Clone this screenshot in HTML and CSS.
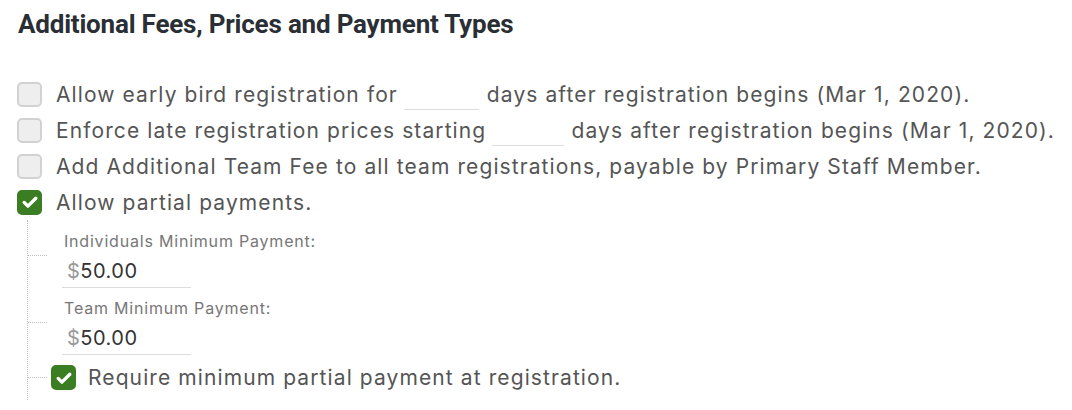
FILE: index.html
```html
<!DOCTYPE html>
<html lang="en">
  <head>
    <meta charset="UTF-8" />
    <title>Additional Fees</title>
    <link rel="stylesheet" href="styles.css">
  </head>
  <body>
    <h2 class="section-title">Additional Fees, Prices and Payment Types</h2>

    <div class="options">
      <label class="check-row">
        <span class="box"></span>
        <span class="check-text">Allow early bird registration for</span>
        <span class="days-input"></span>
        <span class="check-text">days after registration begins (Mar 1, 2020).</span>
      </label>

      <label class="check-row">
        <span class="box"></span>
        <span class="check-text">Enforce late registration prices starting</span>
        <span class="days-input"></span>
        <span class="check-text">days after registration begins (Mar 1, 2020).</span>
      </label>

      <label class="check-row">
        <span class="box"></span>
        <span class="check-text">Add Additional Team Fee to all team registrations, payable by Primary Staff Member.</span>
      </label>

      <label class="check-row">
        <span class="box checked">
          <svg viewBox="0 0 24 24" width="20" height="20"><path d="M5 12.5l4.5 4.5L19 7.5" fill="none" stroke="#fff" stroke-width="4" stroke-linecap="round" stroke-linejoin="round"/></svg>
        </span>
        <span class="check-text">Allow partial payments.</span>
      </label>

      <div class="sub-options">
        <div class="branch-row field-row">
          <span class="branch"></span>
          <div class="money-field">
            <div class="field-label">Individuals Minimum Payment:</div>
            <div class="money-input"><span class="currency">$</span>50.00</div>
          </div>
        </div>

        <div class="branch-row field-row">
          <span class="branch"></span>
          <div class="money-field">
            <div class="field-label">Team Minimum Payment:</div>
            <div class="money-input"><span class="currency">$</span>50.00</div>
          </div>
        </div>

        <div class="branch-row last-row">
          <span class="branch center"></span>
          <label class="check-row sub-check">
            <span class="box checked">
              <svg viewBox="0 0 24 24" width="20" height="20"><path d="M5 12.5l4.5 4.5L19 7.5" fill="none" stroke="#fff" stroke-width="4" stroke-linecap="round" stroke-linejoin="round"/></svg>
            </span>
            <span class="check-text">Require minimum partial payment at registration.</span>
          </label>
        </div>
      </div>
    </div>
  </body>
</html>
```

FILE: styles.css
```css
body {
  margin: 0;
  padding: 0 17px;
  background: #fff;
  font-family: Inter, "Open Sans", sans-serif;
  color: #555;
}

.section-title {
  margin: 0;
  padding: 9px 0 0 1px;
  font-family: Roboto, sans-serif;
  font-size: 26px;
  font-weight: 700;
  line-height: 30px;
  letter-spacing: -0.2px;
  color: #2a2f36;
}

.options {
  margin-top: 37px;
}

.check-row {
  display: flex;
  align-items: center;
  height: 36px;
  white-space: nowrap;
}

.box {
  flex: none;
  box-sizing: border-box;
  width: 25px;
  height: 25px;
  border: 2px solid #d2d2d2;
  border-radius: 5px;
  background: #eeeeee;
  margin-right: 14px;
  display: flex;
  align-items: center;
  justify-content: center;
}

.box.checked {
  background: #3a7d23;
  border-color: #3a7d23;
}

.check-text {
  font-size: 21px;
  letter-spacing: 1.1px;
  color: #555;
}

.days-input {
  display: inline-block;
  width: 75px;
  height: 22px;
  border-bottom: 1px solid #ddd;
  margin: 8px 8px 0 6px;
}

.sub-options {
  margin-left: 10px;
  border-left: 1px dotted #bdbdbd;
  padding-top: 10px;
  padding-bottom: 10px;
}

.branch-row {
  display: flex;
  align-items: flex-start;
}

.branch {
  flex: none;
  width: 19px;
  border-top: 1px dotted #bdbdbd;
  margin-top: 25px;
}

.branch.center {
  margin-top: 12px;
}

.field-row + .field-row {
  margin-top: 9px;
}

.money-field {
  margin-left: 15px;
  width: 129px;
}

.field-label {
  font-size: 16px;
  letter-spacing: 0.8px;
  line-height: 22px;
  color: #777;
  padding-left: 2px;
  white-space: nowrap;
}

.money-input {
  height: 35px;
  line-height: 38px;
  font-size: 20px;
  letter-spacing: 0.5px;
  color: #333;
  padding-left: 5px;
  border-bottom: 1px solid #ddd;
}

.currency {
  color: #999;
}

.last-row {
  margin-top: 10px;
}

.sub-check {
  height: 25px;
  margin-left: 4px;
}

.sub-check .box {
  margin-right: 12px;
}
```
